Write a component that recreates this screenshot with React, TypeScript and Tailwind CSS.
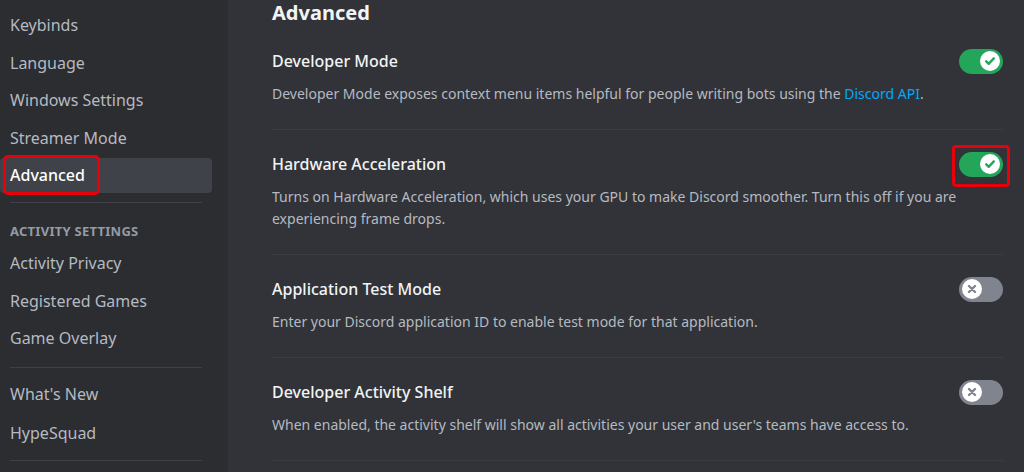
import React from "react";

const font = { fontFamily: '"Noto Sans", "Open Sans", sans-serif' };

function Toggle({ on, boxed }: { on: boolean; boxed?: boolean }) {
  return (
    <div className="relative shrink-0">
      <div
        className={`flex h-[25px] w-[44px] items-center rounded-full px-[3px] ${
          on ? "justify-end bg-[#23a55a]" : "justify-start bg-[#80848e]"
        }`}
      >
        <div className="flex h-[20px] w-[20px] items-center justify-center rounded-full bg-white">
          {on ? (
            <svg width="12" height="12" viewBox="0 0 12 12" fill="none">
              <path d="M2.2 6.3 L4.8 8.8 L9.8 3.4" stroke="#23a55a" strokeWidth="2.4" strokeLinecap="round" strokeLinejoin="round" />
            </svg>
          ) : (
            <svg width="12" height="12" viewBox="0 0 12 12" fill="none">
              <path d="M3 3 L9 9 M9 3 L3 9" stroke="#80848e" strokeWidth="2.4" strokeLinecap="round" />
            </svg>
          )}
        </div>
      </div>
      {boxed && (
        <div className="pointer-events-none absolute left-[-7px] top-[-7px] h-[42px] w-[58px] rounded-[4px] border-[3px] border-[#e8000b]" />
      )}
    </div>
  );
}

function Section({
  title,
  on,
  boxed,
  children,
  first,
}: {
  title: string;
  on: boolean;
  boxed?: boolean;
  children: React.ReactNode;
  first?: boolean;
}) {
  return (
    <div className={`${first ? "pt-[48.5px]" : "pt-[22px]"} border-b border-[#3b3d43] pb-[23.5px]`}>
      <div className="flex h-[25px] items-center justify-between">
        <div className="text-[16px] font-medium leading-[24px] text-[#f2f3f5]">{title}</div>
        <Toggle on={on} boxed={boxed} />
      </div>
      <div className="mt-[9.5px] text-[14px] leading-[22px] text-[#b5bac1]">{children}</div>
    </div>
  );
}

function SideItem({
  label,
  active,
  boxed,
  mb = "mb-[2.5px]",
}: {
  label: string;
  active?: boolean;
  boxed?: boolean;
  mb?: string;
}) {
  return (
    <div
      className={`relative ${mb} flex h-[35px] items-center rounded-[4px] pl-[10px] text-[16px] ${
        active ? "bg-[#404249] font-medium text-white" : "text-[#b5bac1]"
      }`}
    >
      {label}
      {boxed && (
        <div className="pointer-events-none absolute left-[3px] top-[-3px] h-[40px] w-[97px] rounded-[5px] border-[3px] border-[#e8000b]" />
      )}
    </div>
  );
}

export default function App() {
  return (
    <div className="flex h-[472px] w-[1024px] overflow-hidden bg-[#313338]" style={font}>
      <div className="w-[228px] shrink-0 bg-[#2b2d31] pr-[16px] pt-[7.5px]">
        <SideItem label="Keybinds" />
        <SideItem label="Language" />
        <SideItem label="Windows Settings" />
        <SideItem label="Streamer Mode" />
        <SideItem label="Advanced" active boxed />
        <div className="mx-[10px] mb-[20px] mt-[9px] h-px bg-[#3f4147]" />
        <div className="mb-[5px] flex h-[18px] items-center pl-[10px] text-[13px] font-bold uppercase tracking-[0.02em] text-[#949ba4]">
          Activity Settings
        </div>
        <SideItem label="Activity Privacy" />
        <SideItem label="Registered Games" />
        <SideItem label="Game Overlay" />
        <div className="mx-[10px] mb-[9px] mt-[11px] h-px bg-[#3f4147]" />
        <SideItem label="What's New" mb="mb-[3.5px]" />
        <SideItem label="HypeSquad" />
        <div className="mx-[10px] mt-[10px] h-px bg-[#3f4147]" />
      </div>
      <div className="w-[775px] pl-[44px]">
        <div className="relative">
          <div className="absolute left-0 top-0 text-[20px] font-bold leading-[26px] text-[#f2f3f5]">Advanced</div>
        </div>
        <Section title="Developer Mode" on first>
          Developer Mode exposes context menu items helpful for people writing bots using the{" "}
          <span className="text-[#00a8fc]">Discord API</span>.
        </Section>
        <Section title="Hardware Acceleration" on boxed>
          Turns on Hardware Acceleration, which uses your GPU to make Discord smoother. Turn this off if you are
          experiencing frame drops.
        </Section>
        <Section title="Application Test Mode" on={false}>
          Enter your Discord application ID to enable test mode for that application.
        </Section>
        <Section title="Developer Activity Shelf" on={false}>
          When enabled, the activity shelf will show all activities your user and user's teams have access to.
        </Section>
      </div>
    </div>
  );
}
